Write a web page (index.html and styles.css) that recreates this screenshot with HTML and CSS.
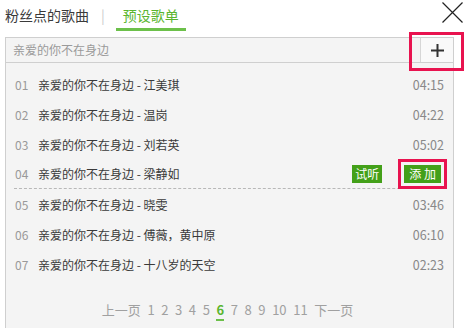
FILE: index.html
```html
<!DOCTYPE html>
<html lang="zh-CN">
<head>
<meta charset="utf-8">
<title>预设歌单</title>
<link rel="stylesheet" href="styles.css">
</head>
<body>
<div class="dialog">
  <div class="header">
    <div class="tab">粉丝点的歌曲</div>
    <div class="sep">|</div>
    <div class="tab active">预设歌单</div>
    <div class="close">
      <svg width="21" height="21" viewBox="0 0 21 21"><path d="M0.5 0.5 L20.5 20.5 M20.5 0.5 L0.5 20.5" stroke="#222" stroke-width="1.2" fill="none"/></svg>
    </div>
  </div>
  <div class="search">
    <div class="search-input">亲爱的你不在身边</div>
    <div class="add-btn highlight-plus">
      <svg width="13" height="13" viewBox="0 0 13 13"><path d="M6.5 0 V13 M0 6.5 H13" stroke="#333" stroke-width="2"/></svg>
    </div>
  </div>
  <div class="panel">
    <ul class="list">
      <li class="row"><span class="num">01</span><span class="title">亲爱的你不在身边 - 江美琪</span><span class="time">04:15</span></li>
      <li class="row"><span class="num">02</span><span class="title">亲爱的你不在身边 - 温岗</span><span class="time">04:22</span></li>
      <li class="row"><span class="num">03</span><span class="title">亲爱的你不在身边 - 刘若英</span><span class="time">05:02</span></li>
      <li class="row hover"><span class="num">04</span><span class="title">亲爱的你不在身边 - 梁静如</span><span class="btn">试听</span><span class="btn btn-add">添 加</span></li>
      <li class="row"><span class="num">05</span><span class="title">亲爱的你不在身边 - 晓雯</span><span class="time">03:46</span></li>
      <li class="row"><span class="num">06</span><span class="title">亲爱的你不在身边 - 傅薇，黄中原</span><span class="time">06:10</span></li>
      <li class="row"><span class="num">07</span><span class="title">亲爱的你不在身边 - 十八岁的天空</span><span class="time">02:23</span></li>
    </ul>
    <div class="pager">
      <span>上一页</span><span>1</span><span>2</span><span>3</span><span>4</span><span>5</span><span class="cur">6</span><span>7</span><span>8</span><span>9</span><span>10</span><span>11</span><span>下一页</span>
    </div>
  </div>
</div>
</body>
</html>
```

FILE: styles.css
```css
* { box-sizing: border-box; }
html, body { margin: 0; padding: 0; background: #fff; }
body {
  font-family: "Noto Sans CJK SC", "Noto Sans", sans-serif;
  width: 467px;
  height: 328px;
  overflow: hidden;
}
.dialog { position: relative; }
.header {
  display: flex;
  align-items: flex-start;
  height: 37px;
  padding-left: 5px;
}
.tab {
  font-size: 14px;
  line-height: 20px;
  padding-top: 5px;
  color: #3a3a3a;
}
.sep {
  font-size: 14px;
  line-height: 20px;
  padding-top: 5px;
  color: #ccc;
  margin: 0 11px 0 12px;
}
.tab.active {
  color: #5ab52e;
  border-bottom: 3px solid #6cc04a;
  height: 31px;
  padding-left: 7px;
  padding-right: 7px;
}
.close {
  margin-left: auto;
  margin-right: 4px;
  margin-top: 2px;
  height: 21px;
}
.close svg { display: block; }
.search {
  display: flex;
  width: 449px;
  height: 26px;
  margin-left: 5px;
  border: 1px solid #cfcfcf;
  background: #f4f4f4;
}
.search-input {
  flex: 1;
  font-size: 12px;
  line-height: 24px;
  color: #9a9a9a;
  padding-left: 7px;
}
.add-btn {
  width: 33px;
  border-left: 1px solid #d6d6d6;
  background: #f9f9f9;
  display: flex;
  align-items: center;
  justify-content: center;
  position: relative;
}
.add-btn svg { display: block; }
.highlight-plus::after {
  content: "";
  position: absolute;
  left: -12px;
  right: -11px;
  top: -6px;
  bottom: -9px;
  border: 3px solid #e8134f;
}
.panel {
  width: 449px;
  margin-left: 5px;
  height: 265px;
  background: #f4f4f4;
  border-left: 1px solid #cfcfcf;
  border-right: 1px solid #cfcfcf;
  padding-top: 6px;
}
.list { list-style: none; margin: 0; padding: 0 8px 0 8px; }
.row {
  display: flex;
  align-items: center;
  height: 30px;
  font-size: 12px;
  padding-left: 1px;
  padding-right: 1px;
}
.row.hover { border-bottom: 1px dashed #b8b8b8; }
.num { width: 23px; color: #999; }
.title { color: #3a3a3a; flex: 1; }
.time { color: #888; font-size: 12.5px; }
.btn {
  background: #43a019;
  color: #fff;
  font-size: 12px;
  line-height: 18px;
  height: 18px;
  padding: 0 3px;
  margin-left: 21px;
}
.btn-add {
  padding: 0 5px;
  margin-left: 22px;
  margin-right: 3px;
  outline: 3px solid #e8134f;
  outline-offset: 3px;
}
.pager {
  display: flex;
  justify-content: center;
  align-items: flex-start;
  gap: 6.6px;
  margin-top: 23px;
  padding-right: 4px;
  font-size: 13px;
  line-height: 16px;
  color: #a0a0a0;
}
.pager .cur {
  color: #5ab52e;
  font-weight: bold;
  border-bottom: 2px solid #6cc04a;
  padding-bottom: 1px;
}
```
